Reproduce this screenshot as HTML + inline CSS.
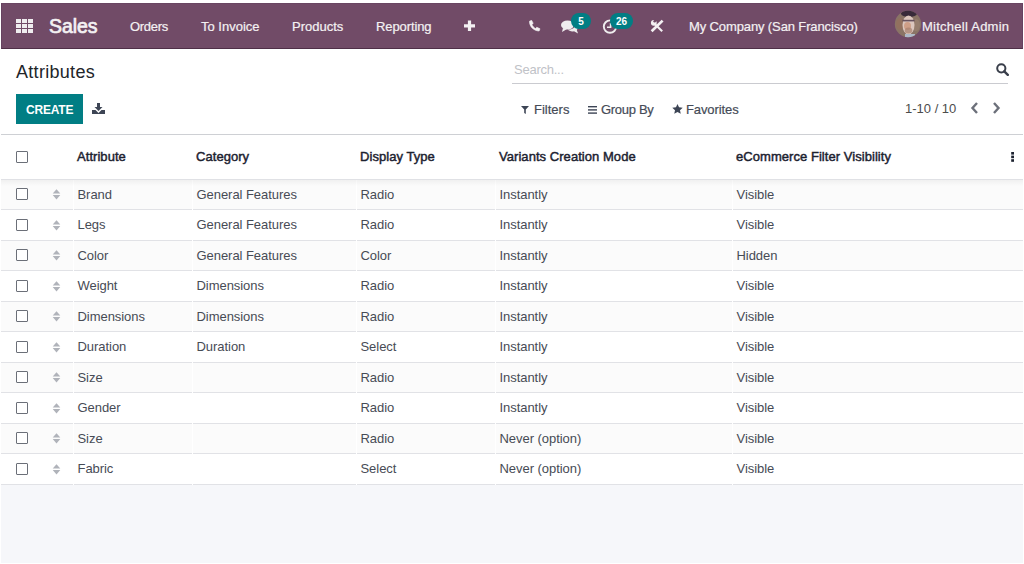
<!DOCTYPE html>
<html><head><meta charset="utf-8">
<style>
*{box-sizing:border-box;margin:0;padding:0}
html,body{width:1024px;height:564px;overflow:hidden;background:#fff;font-family:"Liberation Sans",sans-serif}
.a{position:absolute;white-space:nowrap}
#app{position:absolute;left:1px;top:3px;width:1022px;height:560px;background:#fff;overflow:hidden}
#nav{position:absolute;left:0;top:0;width:1022px;height:46px;background:#714B67;border:1px solid #664260;border-top-color:#6a4662;border-bottom-color:#4f2f47}
.nt{color:#f4f1f3;font-size:13px;line-height:13px;-webkit-text-stroke:0.2px #f4f1f3}
.cp{position:absolute;left:0;top:46px;width:1022px;height:86px;background:#fff;border-bottom:1px solid #ced0d4}
.t{color:#474b55;font-size:13px;line-height:13px;letter-spacing:-0.05px}
.h{color:#1c2230;font-size:13px;line-height:13px;letter-spacing:0.05px;-webkit-text-stroke:0.45px #1c2230}
.cb{position:absolute;width:12px;height:12px;border:1px solid #6b6f78;border-radius:1px;background:#fff}
.row{position:absolute;left:0;width:1022px;border-bottom:1px solid #e1e2e6}
.odd{background:#fbfbfb}
.sep{position:absolute;top:0;bottom:-1px;width:1px;background:#fff}
.bd{position:absolute;height:16px;border-radius:8px;background:#017e84;color:#fff;font-size:10px;line-height:18px;font-weight:bold;text-align:center}
</style></head>
<body>
<div id="app">
<div id="nav">
<svg class="a" style="left:14px;top:15px" width="17" height="14" viewBox="0 0 17 14"><g fill="#efedef"><rect x="0" y="0" width="5" height="4"/><rect x="6" y="0" width="5" height="4"/><rect x="12" y="0" width="5" height="4"/><rect x="0" y="5" width="5" height="4"/><rect x="6" y="5" width="5" height="4"/><rect x="12" y="5" width="5" height="4"/><rect x="0" y="10" width="5" height="4"/><rect x="6" y="10" width="5" height="4"/><rect x="12" y="10" width="5" height="4"/></g></svg>
<div class="a" style="left:47px;top:13px;color:#f4f1f3;font-size:19.5px;line-height:19.5px;letter-spacing:-0.1px;-webkit-text-stroke:0.7px #f4f1f3">Sales</div>
<div class="a nt" style="left:128px;top:16px;letter-spacing:-0.3px">Orders</div>
<div class="a nt" style="left:199px;top:16px;letter-spacing:0px">To Invoice</div>
<div class="a nt" style="left:290px;top:16px;letter-spacing:0px">Products</div>
<div class="a nt" style="left:374px;top:16px;letter-spacing:-0.1px">Reporting</div>
<svg class="a" style="left:462px;top:16px" width="12" height="12" viewBox="0 0 12 12"><path d="M3.9 0.5h3.2v3.8H11v3.1H7.1V11H3.9V7.4H0V4.3h3.9z" fill="#f4f1f3"/></svg>
<svg class="a" style="left:526px;top:16px" width="13" height="12" viewBox="0 0 13 12"><path d="M1.5 1.2 L3.6 0.3 L5.2 3.4 L3.9 4.6 C4.6 6.3 5.9 7.7 7.6 8.5 L8.8 7.2 L12 8.8 L11.1 11 C6 11 1.2 6.5 1.5 1.2Z" fill="#f4f1f3" stroke="#f4f1f3" stroke-width="0.6" stroke-linejoin="round"/></svg>
<svg class="a" style="left:559px;top:16px" width="18" height="14" viewBox="0 0 18 14">
      <ellipse cx="6.5" cy="5" rx="6.5" ry="4.6" fill="#efedef"/>
      <path d="M2 8 L1 12 L6 9Z" fill="#efedef"/>
      <path d="M13.8 4.5 C16.5 5.5 17.5 8 15.8 10 L17 13.5 L13 11.2 C10.5 11.8 8 11 6.8 9.6 C11 9.8 14.5 7.8 13.8 4.5Z" fill="#efedef"/></svg>
<div class="a bd" style="left:569px;top:9px;width:20px">5</div>
<svg class="a" style="left:599px;top:14px" width="18" height="17" viewBox="0 0 18 17">
      <circle cx="9" cy="8.6" r="6.2" fill="none" stroke="#efedef" stroke-width="1.9"/>
      <path d="M9.6 5V9.3H6" fill="none" stroke="#efedef" stroke-width="1.6"/></svg>
<div class="a bd" style="left:608px;top:9px;width:23px">26</div>
<svg class="a" style="left:648px;top:15px" width="15" height="14" viewBox="0 0 15 14">
      <path d="M5 5.2 L12.2 12.2" stroke="#f4f1f3" stroke-width="2.1"/>
      <circle cx="3.8" cy="3.8" r="2.9" fill="#f4f1f3"/>
      <path d="M3.2 0.2 L5.6 2.6 L4.4 3.8 L7.2 1.4Z" fill="#714B67"/>
      <circle cx="4.6" cy="2.2" r="1.2" fill="#714B67"/>
      <path d="M1.6 12.2 L12.6 1.6" stroke="#f4f1f3" stroke-width="2.7"/></svg>
<div class="a nt" style="left:687px;top:16px;letter-spacing:-0.12px">My Company (San Francisco)</div>
<svg class="a" style="left:892px;top:6px" width="28" height="28" viewBox="0 0 28 28">
      <defs><clipPath id="cl"><circle cx="14" cy="14" r="13.2"/></clipPath></defs>
      <g clip-path="url(#cl)">
        <rect width="28" height="28" fill="#8a7466"/>
        <ellipse cx="6" cy="14" rx="4" ry="6" fill="#94705e" opacity="0.8"/>
        <ellipse cx="22" cy="15" rx="4" ry="6" fill="#98806f" opacity="0.8"/>
        <ellipse cx="15" cy="3.5" rx="8" ry="3.6" fill="#2f2234" opacity="0.9"/>
        <ellipse cx="14.5" cy="15" rx="6" ry="9.5" fill="#dcc6bd"/>
        <ellipse cx="13.5" cy="16" rx="3.5" ry="4" fill="#c98f72" opacity="0.7"/>
        <rect x="8.5" y="9.8" width="12" height="1.6" fill="#5a4553" opacity="0.9"/>
        <ellipse cx="14.5" cy="20.5" rx="3.8" ry="3" fill="#a7806f" opacity="0.7"/>
        <rect x="11" y="24" width="10" height="5" fill="#aeb9c8"/>
      </g></svg>
<div class="a nt" style="left:920px;top:16px;letter-spacing:0.25px">Mitchell Admin</div>
</div>
<div class="cp">
<div class="a" style="left:15px;top:14px;color:#212529;font-size:18px;line-height:18px;letter-spacing:0.3px">Attributes</div>
<div class="a" style="left:513px;top:14px;color:#bfc2c7;font-size:13px;line-height:13px;letter-spacing:-0.25px">Search...</div>
<div class="a" style="left:511px;top:34px;width:496px;height:1px;background:#cacbd0"></div>
<svg class="a" style="left:995px;top:14px" width="13" height="13" viewBox="0 0 13 13">
      <circle cx="5.3" cy="5.3" r="4.1" fill="none" stroke="#3a3f4b" stroke-width="2"/>
      <path d="M8.3 8.3L11.8 11.8" stroke="#3a3f4b" stroke-width="2.4" stroke-linecap="round"/></svg>
<div class="a" style="left:15px;top:45px;width:67px;height:30px;background:#017e84"></div>
<div class="a" style="left:25px;top:55px;color:#fff;font-size:12px;line-height:12px;font-weight:bold;letter-spacing:-0.2px">CREATE</div>
<svg class="a" style="left:91px;top:54px" width="13" height="11" viewBox="0 0 13 11">
      <path d="M5 0h3v4h2.5L6.5 8 2.5 4H5z" fill="#3d4555"/>
      <path d="M0 7h3.5l3 3 3-3H13v4H0z" fill="#3d4555"/></svg>
<svg class="a" style="left:520px;top:57px" width="8" height="8" viewBox="0 0 8 8"><path d="M0 0h8L4.8 3.5V8L3.2 7V3.5z" fill="#3d4555"/></svg>
<div class="a" style="left:533px;top:54px;color:#454b57;font-size:13px;line-height:13px;-webkit-text-stroke:0.2px #454b57">Filters</div>
<svg class="a" style="left:587px;top:57px" width="9" height="8" viewBox="0 0 9 8"><g fill="#3d4555"><rect y="0" width="9" height="1.4"/><rect y="3.2" width="9" height="1.4"/><rect y="6.4" width="9" height="1.4"/></g></svg>
<div class="a" style="left:600px;top:54px;color:#454b57;font-size:13px;line-height:13px;-webkit-text-stroke:0.2px #454b57;letter-spacing:-0.3px">Group By</div>
<svg class="a" style="left:671px;top:55px" width="11" height="10" viewBox="0 0 24 23"><path d="M12 0l3.5 7.6 8.5.9-6.3 5.7 1.8 8.4L12 18.3 4.5 22.6l1.8-8.4L0 8.5l8.5-.9z" fill="#3d4555"/></svg>
<div class="a" style="left:685px;top:54px;color:#454b57;font-size:13px;line-height:13px;-webkit-text-stroke:0.2px #454b57;letter-spacing:-0.1px">Favorites</div>
<div class="a" style="left:904px;top:53px;color:#4c4c4c;font-size:13px;line-height:13px">1-10 / 10</div>
<svg class="a" style="left:969px;top:53px" width="9" height="12" viewBox="0 0 9 12"><path d="M7 1L2.5 6 7 11" fill="none" stroke="#6c707a" stroke-width="2.4"/></svg>
<svg class="a" style="left:991px;top:53px" width="9" height="12" viewBox="0 0 9 12"><path d="M2 1l4.5 5L2 11" fill="none" stroke="#6c707a" stroke-width="2.4"/></svg>
</div>
<div class="a" style="left:0;top:132px;width:1022px;height:45px;background:#fff;border-bottom:1px solid #e0e1e5"></div>
<div class="cb" style="left:15px;top:148px"></div>
<div class="a h" style="left:76px;top:147px">Attribute</div>
<div class="a h" style="left:195px;top:147px">Category</div>
<div class="a h" style="left:359px;top:147px">Display Type</div>
<div class="a h" style="left:498px;top:147px">Variants Creation Mode</div>
<div class="a h" style="left:735px;top:147px">eCommerce Filter Visibility</div>
<svg class="a" style="left:1009px;top:149px" width="5" height="11" viewBox="0 0 5 11"><g fill="#1c2230"><rect x="1.2" y="0" width="2.8" height="2.6"/><rect x="1.2" y="3.6" width="2.8" height="2.6"/><rect x="1.2" y="7.2" width="2.8" height="2.6"/></g></svg>
<div class="row odd" style="top:177px;height:30px"><div class="sep" style="left:72px"></div><div class="sep" style="left:191px"></div><div class="sep" style="left:355px"></div><div class="sep" style="left:494px"></div><div class="sep" style="left:731px"></div></div>
<div class="cb" style="left:15px;top:185px"></div>
<svg class="a" style="left:51px;top:186px" width="9" height="11" viewBox="0 0 9 11"><path d="M4.5 0.3L8.3 4.4H0.7z M0.7 6.1H8.3L4.5 10.5z" fill="#b0b3ba"/></svg>
<div class="a t" style="left:76.5px;top:185px">Brand</div>
<div class="a t" style="left:195.5px;top:185px">General Features</div>
<div class="a t" style="left:359.5px;top:185px">Radio</div>
<div class="a t" style="left:498.5px;top:185px">Instantly</div>
<div class="a t" style="left:735.5px;top:185px">Visible</div>
<div class="row" style="top:207px;height:31px"><div class="sep" style="left:72px"></div><div class="sep" style="left:191px"></div><div class="sep" style="left:355px"></div><div class="sep" style="left:494px"></div><div class="sep" style="left:731px"></div></div>
<div class="cb" style="left:15px;top:216px"></div>
<svg class="a" style="left:51px;top:217px" width="9" height="11" viewBox="0 0 9 11"><path d="M4.5 0.3L8.3 4.4H0.7z M0.7 6.1H8.3L4.5 10.5z" fill="#b0b3ba"/></svg>
<div class="a t" style="left:76.5px;top:215px">Legs</div>
<div class="a t" style="left:195.5px;top:215px">General Features</div>
<div class="a t" style="left:359.5px;top:215px">Radio</div>
<div class="a t" style="left:498.5px;top:215px">Instantly</div>
<div class="a t" style="left:735.5px;top:215px">Visible</div>
<div class="row odd" style="top:238px;height:30px"><div class="sep" style="left:72px"></div><div class="sep" style="left:191px"></div><div class="sep" style="left:355px"></div><div class="sep" style="left:494px"></div><div class="sep" style="left:731px"></div></div>
<div class="cb" style="left:15px;top:246px"></div>
<svg class="a" style="left:51px;top:247px" width="9" height="11" viewBox="0 0 9 11"><path d="M4.5 0.3L8.3 4.4H0.7z M0.7 6.1H8.3L4.5 10.5z" fill="#b0b3ba"/></svg>
<div class="a t" style="left:76.5px;top:246px">Color</div>
<div class="a t" style="left:195.5px;top:246px">General Features</div>
<div class="a t" style="left:359.5px;top:246px">Color</div>
<div class="a t" style="left:498.5px;top:246px">Instantly</div>
<div class="a t" style="left:735.5px;top:246px">Hidden</div>
<div class="row" style="top:268px;height:31px"><div class="sep" style="left:72px"></div><div class="sep" style="left:191px"></div><div class="sep" style="left:355px"></div><div class="sep" style="left:494px"></div><div class="sep" style="left:731px"></div></div>
<div class="cb" style="left:15px;top:277px"></div>
<svg class="a" style="left:51px;top:278px" width="9" height="11" viewBox="0 0 9 11"><path d="M4.5 0.3L8.3 4.4H0.7z M0.7 6.1H8.3L4.5 10.5z" fill="#b0b3ba"/></svg>
<div class="a t" style="left:76.5px;top:276px">Weight</div>
<div class="a t" style="left:195.5px;top:276px">Dimensions</div>
<div class="a t" style="left:359.5px;top:276px">Radio</div>
<div class="a t" style="left:498.5px;top:276px">Instantly</div>
<div class="a t" style="left:735.5px;top:276px">Visible</div>
<div class="row odd" style="top:299px;height:30px"><div class="sep" style="left:72px"></div><div class="sep" style="left:191px"></div><div class="sep" style="left:355px"></div><div class="sep" style="left:494px"></div><div class="sep" style="left:731px"></div></div>
<div class="cb" style="left:15px;top:307px"></div>
<svg class="a" style="left:51px;top:308px" width="9" height="11" viewBox="0 0 9 11"><path d="M4.5 0.3L8.3 4.4H0.7z M0.7 6.1H8.3L4.5 10.5z" fill="#b0b3ba"/></svg>
<div class="a t" style="left:76.5px;top:307px">Dimensions</div>
<div class="a t" style="left:195.5px;top:307px">Dimensions</div>
<div class="a t" style="left:359.5px;top:307px">Radio</div>
<div class="a t" style="left:498.5px;top:307px">Instantly</div>
<div class="a t" style="left:735.5px;top:307px">Visible</div>
<div class="row" style="top:329px;height:31px"><div class="sep" style="left:72px"></div><div class="sep" style="left:191px"></div><div class="sep" style="left:355px"></div><div class="sep" style="left:494px"></div><div class="sep" style="left:731px"></div></div>
<div class="cb" style="left:15px;top:338px"></div>
<svg class="a" style="left:51px;top:339px" width="9" height="11" viewBox="0 0 9 11"><path d="M4.5 0.3L8.3 4.4H0.7z M0.7 6.1H8.3L4.5 10.5z" fill="#b0b3ba"/></svg>
<div class="a t" style="left:76.5px;top:337px">Duration</div>
<div class="a t" style="left:195.5px;top:337px">Duration</div>
<div class="a t" style="left:359.5px;top:337px">Select</div>
<div class="a t" style="left:498.5px;top:337px">Instantly</div>
<div class="a t" style="left:735.5px;top:337px">Visible</div>
<div class="row odd" style="top:360px;height:30px"><div class="sep" style="left:72px"></div><div class="sep" style="left:191px"></div><div class="sep" style="left:355px"></div><div class="sep" style="left:494px"></div><div class="sep" style="left:731px"></div></div>
<div class="cb" style="left:15px;top:368px"></div>
<svg class="a" style="left:51px;top:369px" width="9" height="11" viewBox="0 0 9 11"><path d="M4.5 0.3L8.3 4.4H0.7z M0.7 6.1H8.3L4.5 10.5z" fill="#b0b3ba"/></svg>
<div class="a t" style="left:76.5px;top:368px">Size</div>
<div class="a t" style="left:359.5px;top:368px">Radio</div>
<div class="a t" style="left:498.5px;top:368px">Instantly</div>
<div class="a t" style="left:735.5px;top:368px">Visible</div>
<div class="row" style="top:390px;height:31px"><div class="sep" style="left:72px"></div><div class="sep" style="left:191px"></div><div class="sep" style="left:355px"></div><div class="sep" style="left:494px"></div><div class="sep" style="left:731px"></div></div>
<div class="cb" style="left:15px;top:399px"></div>
<svg class="a" style="left:51px;top:400px" width="9" height="11" viewBox="0 0 9 11"><path d="M4.5 0.3L8.3 4.4H0.7z M0.7 6.1H8.3L4.5 10.5z" fill="#b0b3ba"/></svg>
<div class="a t" style="left:76.5px;top:398px">Gender</div>
<div class="a t" style="left:359.5px;top:398px">Radio</div>
<div class="a t" style="left:498.5px;top:398px">Instantly</div>
<div class="a t" style="left:735.5px;top:398px">Visible</div>
<div class="row odd" style="top:421px;height:30px"><div class="sep" style="left:72px"></div><div class="sep" style="left:191px"></div><div class="sep" style="left:355px"></div><div class="sep" style="left:494px"></div><div class="sep" style="left:731px"></div></div>
<div class="cb" style="left:15px;top:429px"></div>
<svg class="a" style="left:51px;top:430px" width="9" height="11" viewBox="0 0 9 11"><path d="M4.5 0.3L8.3 4.4H0.7z M0.7 6.1H8.3L4.5 10.5z" fill="#b0b3ba"/></svg>
<div class="a t" style="left:76.5px;top:429px">Size</div>
<div class="a t" style="left:359.5px;top:429px">Radio</div>
<div class="a t" style="left:498.5px;top:429px">Never (option)</div>
<div class="a t" style="left:735.5px;top:429px">Visible</div>
<div class="row" style="top:451px;height:31px"><div class="sep" style="left:72px"></div><div class="sep" style="left:191px"></div><div class="sep" style="left:355px"></div><div class="sep" style="left:494px"></div><div class="sep" style="left:731px"></div></div>
<div class="cb" style="left:15px;top:460px"></div>
<svg class="a" style="left:51px;top:461px" width="9" height="11" viewBox="0 0 9 11"><path d="M4.5 0.3L8.3 4.4H0.7z M0.7 6.1H8.3L4.5 10.5z" fill="#b0b3ba"/></svg>
<div class="a t" style="left:76.5px;top:459px">Fabric</div>
<div class="a t" style="left:359.5px;top:459px">Select</div>
<div class="a t" style="left:498.5px;top:459px">Never (option)</div>
<div class="a t" style="left:735.5px;top:459px">Visible</div>
<div class="a" style="left:0;top:177px;width:1022px;height:6px;background:linear-gradient(rgba(0,0,0,0.045),rgba(0,0,0,0))"></div>
<div class="a" style="left:0;top:482px;width:1022px;height:78px;background:#f6f7fa"></div>
</div>
</body></html>
